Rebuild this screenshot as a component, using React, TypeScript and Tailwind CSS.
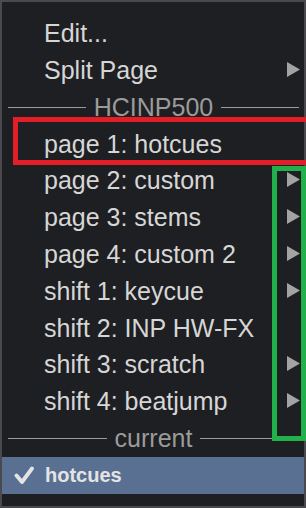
import React from "react";

const Arrow = () => (
  <svg width="13" height="15" viewBox="0 0 13 15" className="ml-auto mr-[4px] mb-[2px] shrink-0">
    <polygon points="0,0 13,7.5 0,15" fill="#a3a3a3" />
  </svg>
);

const Item = ({ label, arrow }: { label: string; arrow?: boolean }) => (
  <div className="flex items-center h-[36.8px] leading-[36.8px] pl-[42px] whitespace-nowrap">
    <span>{label}</span>
    {arrow && <Arrow />}
  </div>
);

const Sep = ({ label }: { label: string }) => (
  <div className="flex items-center h-[36.8px] leading-[36.8px] pl-[6px] pr-[5px] text-[#9b9b9b]">
    <div className="flex-1 h-px bg-[#9b9b9b]" />
    <span className="px-[8px]">{label}</span>
    <div className="flex-1 h-px bg-[#9b9b9b]" />
  </div>
);

export default function App() {
  return (
    <div className="relative w-[306px] h-[508px] overflow-hidden font-['Liberation_Sans',Arial,sans-serif]">
      <div className="w-[306px] h-[508px] border-2 border-[#4a4a4e] bg-[#1e1f22] pt-[13.2px] text-[25px] text-[#d6d6d6]">
        <Item label="Edit..." />
        <Item label="Split Page" arrow />
        <Sep label="HCINP500" />
        <Item label="page 1: hotcues" />
        <Item label="page 2: custom" arrow />
        <Item label="page 3: stems" arrow />
        <Item label="page 4: custom 2" arrow />
        <Item label="shift 1: keycue" arrow />
        <Item label="shift 2: INP HW-FX" />
        <Item label="shift 3: scratch" arrow />
        <Item label="shift 4: beatjump" arrow />
        <Sep label="current" />
        <div className="flex items-center h-[36.8px] leading-[36.8px] bg-[#5a7092] text-[#e4e4e4]">
          <svg width="20" height="18" viewBox="0 0 20 18" className="ml-[12px] shrink-0">
            <path d="M2.5 9.5 L8 16 L18 2.5" fill="none" stroke="#e4e4e4" strokeWidth="3.8" strokeLinecap="round" strokeLinejoin="round" />
          </svg>
          <span className="ml-[11px] text-[20px] font-bold">hotcues</span>
        </div>
      </div>
      <div className="absolute left-[13px] top-[117px] w-[300px] h-[48px] border-[5px] border-[#e31e26]" />
      <div className="absolute left-[272px] top-[166px] w-[34px] h-[275px] border-[5px] border-[#20b14a]" />
    </div>
  );
}
